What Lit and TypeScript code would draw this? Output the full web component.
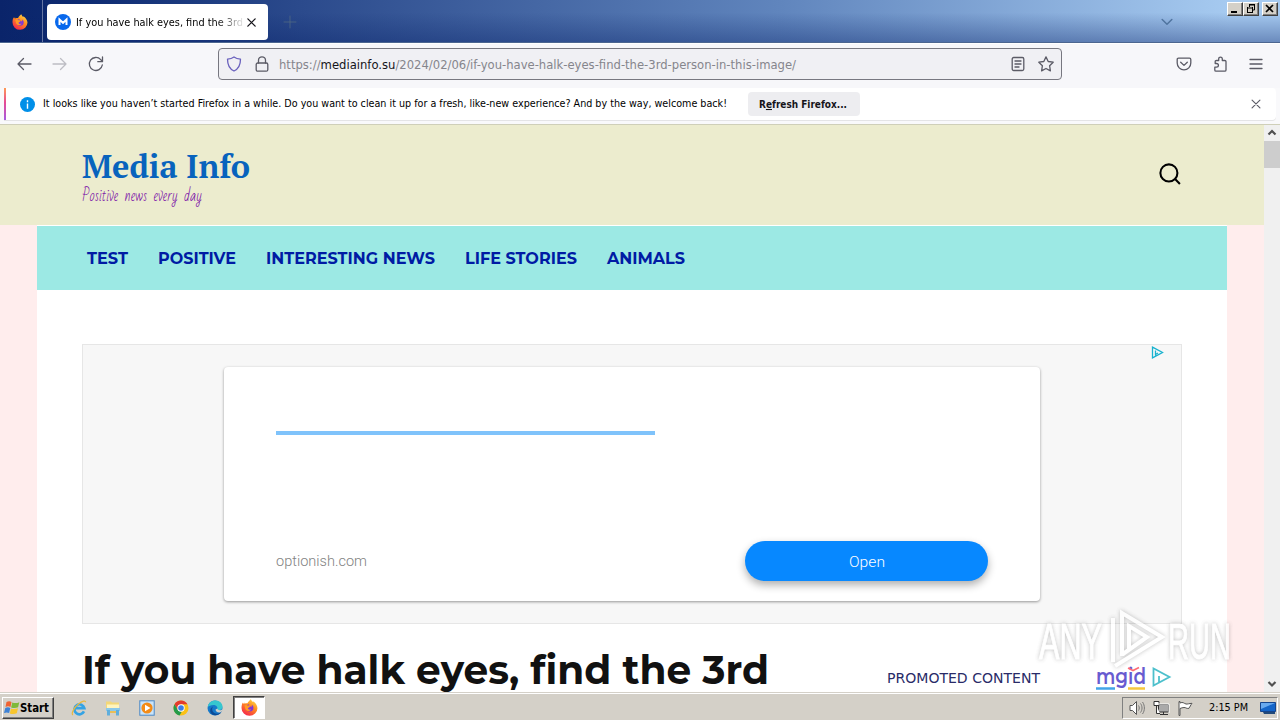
/**
 * Desktop with a maximised browser window: tab strip, toolbar, notification,
 * the news page and the taskbar.
 */

import { LitElement, css, html, svg, type TemplateResult } from 'lit';
import { customElement } from 'lit/decorators.js';

const NAV = [
  { label: 'TEST', width: 41 },
  { label: 'POSITIVE', width: 78 },
  { label: 'INTERESTING NEWS', width: 169 },
  { label: 'LIFE STORIES', width: 112 },
  { label: 'ANIMALS', width: 78 },
];

// Single line of text set to a known width.
const line = (
  text: unknown,
  width: number,
  height: number,
  baseline: number,
  cls = '',
): TemplateResult => html`
  <svg class="line ${cls}" width=${width} height=${height}>
    <text x="0" y=${baseline} textLength=${width} lengthAdjust="spacingAndGlyphs">${text}</text>
  </svg>`;

const icon = (size: number, body: unknown, cls = ''): TemplateResult => html`
  <svg class="icon ${cls}" width=${size} height=${size} viewBox="0 0 16 16">${body}</svg>`;

const firefox = svg`
  <defs>
    <linearGradient id="fx" x1="0.85" y1="0" x2="0.25" y2="1">
      <stop offset="0" stop-color="#ffe14a" />
      <stop offset="0.45" stop-color="#ff8a1e" />
      <stop offset="1" stop-color="#f5224e" />
    </linearGradient>
  </defs>
  <path fill="url(#fx)" d="M1.6 3.2 2 4.6l1-1.3.4 1.2c.9-.4 1.8-.5 2.7-.4.5-1.7 1.9-2.5 3-3.9.7.7.9 1.8 1.9 2.5l.7-.3c1.7 1.2 3.7 3.2 3.8 6.2A7.4 7.4 0 0 1 8 15.8 7.4 7.4 0 0 1 .5 8.3c0-2 .4-3.6 1.1-5.1z" />
  <path fill="#8239d4" d="M7.9 4.900c-1.900.1-3.200 1.500-3.200 3.400a3.500 3.500 0 0 0 7 0c0-1.200-.6-2.200-1.500-2.800.2.9 0 1.700-.7 2-.8-1.100-2-.7-2.600-1.200.2-.5.5-.9 1-1.400z" />
  <path fill="#ff9a26" d="M3.2 6.1c1.2-.9 2.6-.6 3.5.2 1 .1 1.7.2 1.8.7-.3.8-1.5 1-2 1.7.2 1.3 1.7 1.8 3 .9-1 2.200-4.100 2.200-5.300 0z" />`;

const back = svg`<path d="M7.5 2.5 2 8l5.500 5.500M2 8h13" />`;
const forward = svg`<path d="M8.5 2.5 14 8l-5.500 5.500M14 8H1" />`;
const reload = svg`<path d="M14.300 9A6.500 6.500 0 1 1 12.700 3.600L14 5M14.500 1v4.700H9.800" />`;
const shield = svg`<path d="M8 1c2 1.500 4.300 2 6.500 2.100C14.500 8.500 12.800 13 8 15 3.200 13 1.500 8.500 1.500 3.100 3.700 3 6 2.500 8 1z" />`;
const lock = svg`<rect x="2.2" y="7" width="11.6" height="8.2" rx="1.5" /><path d="M4.5 7V4.300a3.500 3.500 0 0 1 7 0V7" />`;
const reader = svg`<rect x="2.2" y="1.5" width="11.6" height="13" rx="1.5" /><path d="M5 5h6M5 8h6M5 11h4" />`;
const star = svg`<path d="m8 .9 2.200 4.600 5 .7-3.600 3.500.8 5.200L8 12.500 3.600 14.900l.8-5.200L.8 6.200l5-.7z" />`;
const pocket = svg`<path d="M2.5 2.200h11c.8 0 1.300.5 1.300 1.300v3.600a6.800 6.800 0 0 1-13.600 0V3.500c0-.8.5-1.300 1.300-1.300zM4.700 6.200 8 9.400l3.300-3.200" />`;
const puzzle = svg`<path d="M4 15.200h8.700c.8 0 1.300-.5 1.300-1.300V5.500c0-.7-.5-1-1.200-1H10.300V3c0-2.600-3.600-2.600-3.600 0v1.500H4.500c-.8 0-1.300.4-1.300 1.200v1.800h1.200c2.700 0 2.700 3.700 0 3.700H2.800V14c0 .8.500 1.200 1.200 1.200z" />`;
const menu = svg`<path d="M2 3.500h12M2 8h12M2 12.500h12" />`;
const cross = svg`<path d="m3.500 3.500 9 9m0-9-9 9" />`;
const chevron = svg`<path d="m2.500 5.200 5.500 5.300 5.500-5.300" />`;

const ie = svg`
  <path fill="none" stroke="#35a3e4" stroke-width="2.600" d="M13 10.800a5 5 0 1 1 .3-3.300H4.300" transform="translate(0 .6)" />
  <path fill="none" stroke="#e9b83c" stroke-width="1.200" d="M2 15C-.3 14 2.800 7.700 7.500 4c3.700-3 7.200-4 7.200-1.700" />`;
const explorer = svg`
  <path fill="#f3d778" d="M1 1.500h5l1 1h7v8H1z" /><path fill="#fff4bd" d="M2 4.500h12v5H2z" />
  <path fill="#8bc8e9" d="M1 8h14v3H1z" /><path fill="#60aedc" d="M2 10h3v5.500H2zM11 10h3v5.500h-3z" />
  <path fill="#e9be56" d="M5 11h6v2H5z" />`;
const player = svg`
  <rect x=".8" y=".8" width="14.4" height="14.4" fill="#c9e4fa" stroke="#4a88c5" />
  <circle cx="8" cy="8" r="5.6" fill="#f38b16" /><path fill="#fff" d="m6 4.700 5.500 3.300L6 11.300z" />`;
const chrome = svg`
  <circle cx="8" cy="8" r="7.5" fill="#fbc116" />
  <path fill="#e33b2e" d="M1.500 4.200A7.500 7.500 0 0 1 14.500 4.300H8L4.800 10z" />
  <path fill="#249b4a" d="M1.500 4.200 4.800 9.900 8 11.600l.7.100-2.100 3.700A7.500 7.500 0 0 1 1.500 4.200z" />
  <circle cx="8" cy="8" r="3.7" fill="#fff" /><circle cx="8" cy="8" r="2.8" fill="#3c7de5" />`;
const edge = svg`
  <circle cx="8" cy="8" r="7.5" fill="#1679ca" />
  <path fill="#36c7cf" d="M.7 7C1.500 2.500 5 .4 8.400.5c4.500.1 7.300 3.300 7.100 6.500-.1 2-1.700 3.200-3.800 3.200-1.300 0-2-.4-1.400-1.300C11 7.500 9.500 5 6.500 5 3.800 5 1.800 6 .7 7z" />
  <path fill="#0c4b96" d="M6 6.500c-2.300 3 .2 7.300 4.200 7.200 2-.1 3.500-.9 4.300-1.700-3.200 4.500-10.300 4.300-11.300-.5C2.900 9.200 4 7.500 6 6.500z" />
  <path fill="#d4d0c8" d="M10.500 8.500c0 1 1 1.700 2.500 1.700 1.300 0 2.300-.6 2.600-1.500 0 2-1.100 3.500-3 3.800-2.600.2-4.200-1.500-4-3z" />`;
const windowsFlag = svg`
  <path fill="#ef6332" d="M2.500 2C4.500.8 6 1 7.500 2l-1 5C5 6 3.300 6 1.500 7z" />
  <path fill="#7fb93b" d="M8.300 2.400c2 1 4.700.9 7-.2l-1.200 5c-2 1-4.700 1.100-7 .2z" />
  <path fill="#3d82d6" d="M1.300 8C3 7.100 4.800 7.200 6.300 8l-1.200 5C3.600 12.200 2 12.200 0 13.100z" />
  <path fill="#f8c62e" d="M7 8.500c2 .9 4.700.7 7-.2l-1.200 5c-2 1-4.700 1.100-7 .2z" />`;
const speaker = svg`
  <path fill="#fff" stroke="#555" d="M1 5.500h2.500l4-4v13l-4-4H1z" />
  <path fill="none" stroke="#777" d="M9.500 5.500c1 1.500 1 3.500 0 5M11.500 3.500c2 2.500 2 6.500 0 9M13.500 2c2.500 3.500 2.500 8.500 0 12" />`;
const network = svg`
  <rect x="5.5" y="4.5" width="10" height="7.5" fill="#aaa" stroke="#333" />
  <path stroke="#333" fill="#fff" d="M7 14.500h8M10.500 12v2.500M1 1.500h5v4H1zM3.500 5.500v8H7" />
  <path stroke="#fff" d="M5 4h11M16 4v9" />`;
const flag = svg`<path fill="#fff" stroke="#555" d="M2 15.500v-14h1v1.500c3-1.500 4 .5 6 1 1.500.3 3-.5 6-.7-1.500 2-2 3.500-3 5-3 .6-3-1-5-.8-1.500 0-2.500.5-4 1v7z" />`;
const monitor = svg`<path fill="#1565c8" stroke="#16458d" d="M.5 2.500h15v9H.5z" /><path fill="#68a9ee" d="M1 3h14L1 9z" /><path fill="#234a7a" d="M3 12h12v2H4z" />`;

@customElement('app-root')
export class AppRoot extends LitElement {
  static override styles = css`
    :host {
      display: flex;
      flex-direction: column;
      width: 1280px;
      height: 720px;
      overflow: hidden;
      position: relative;
      background: #f9f9fb;
      font-family: 'DejaVu Sans Condensed', 'DejaVu Sans', sans-serif;
      font-size: 10.5px;
      color: #000;
    }
    * { box-sizing: border-box; }
    svg { display: block; flex: none; }
    .line { overflow: visible; }
    .line text { fill: currentColor; }
    .icon { overflow: visible; }
    .stroke {
      fill: none;
      stroke: #5b5b66;
      stroke-width: 1.3;
      stroke-linecap: round;
      stroke-linejoin: round;
    }
    .grow { flex: 1; }

    .tabs {
      display: flex;
      flex: none;
      height: 43px;
      background:
        linear-gradient(180deg, rgba(10, 36, 106, 0) 30%, rgba(10, 36, 106, 0.38)),
        linear-gradient(90deg, #0a246a 0, #0e2b72 80px, #2b4a8c 300px, #6085bd 780px, #a6caf0 1230px);
      border-bottom: 1px solid #4c6690;
    }
    .home {
      width: 43px;
      padding: 14px 0 0 12px;
      border-right: 1px solid #6576a3;
    }
    .tab {
      display: flex;
      align-items: center;
      width: 221px;
      height: 36px;
      margin: 4px 0 0 4px;
      padding-left: 8px;
      border-radius: 4px;
      background: #fff;
    }
    .title {
      margin-left: 5px;
      width: 168px;
      overflow: hidden;
      -webkit-mask-image: linear-gradient(90deg, #000 140px, transparent 170px);
      mask-image: linear-gradient(90deg, #000 140px, transparent 170px);
    }
    .close-tab { stroke: #15141a; stroke-width: 1.6; margin-left: 1px; }
    .plus { margin: 16px 0 0 16px; stroke: #536b84; stroke-width: 1; }
    .all-tabs { margin: 15px 53px 0 0; stroke: #50749f; stroke-width: 1.7; }
    .buttons { display: flex; padding: 2px 2px 0 0; }
    .win {
      width: 16px;
      height: 14px;
      background: #d4d0c8;
      border: 1px solid;
      border-color: #fff #404040 #404040 #fff;
      box-shadow: inset -1px -1px #808080;
    }
    .win.last { margin-left: 3px; }
    .win svg { margin: 0 0 0 1px; }

    .toolbar {
      display: flex;
      flex: none;
      align-items: center;
      height: 45px;
      padding: 0 16px 5px;
      border-top: 1px solid #fff;
      background: #f7f7fa;
    }
    .faded { stroke: #bdbdc4; }
    .gap { margin-left: 20px; }
    .url {
      display: flex;
      align-items: center;
      width: 844px;
      height: 32px;
      margin-left: 114px;
      padding: 0 7px;
      border: 1px solid #777780;
      border-radius: 4px;
      background: #f0f0f4;
      font-size: 13px;
      color: #85858c;
    }
    .url .host { fill: #15141a; }
    .url .shield { stroke: #6960bd; }

    .notice {
      display: flex;
      flex: none;
      align-items: center;
      width: 1272px;
      height: 32px;
      margin-left: 4px;
      padding: 0 13px 0 16px;
      position: relative;
      background: #fff;
      border-radius: 0 4px 4px 0;
      box-shadow: 0 1px #e4e4e6;
    }
    .notice::before {
      content: '';
      position: absolute;
      inset: 0 auto 0 0;
      width: 2px;
      background: linear-gradient(#ff9a55, #e64a94 45%, #a65be0);
    }
    .refresh {
      width: 112px;
      height: 24px;
      margin-left: 21px;
      padding: 5px 11px;
      border: 0;
      border-radius: 4px;
      background: #ededf0;
      font: bold 10.5px 'DejaVu Sans Condensed', 'DejaVu Sans', sans-serif;
      color: #15141a;
    }
    .refresh .key { text-decoration: underline; }
    .seam { flex: none; height: 5px; border-bottom: 1px solid #cfcfb9; }

    .view { display: flex; flex: none; height: 567px; }
    .page {
      width: 1264px;
      overflow: hidden;
      background: #ffeded;
    }
    .header {
      display: flex;
      justify-content: space-between;
      height: 100px;
      padding: 24px 83px 0 82px;
      background: #ececce;
    }
    .brand { font: bold 33px 'PT Serif', 'DejaVu Serif Condensed', 'DejaVu Serif', serif; color: #0863bd; }
    .tagline {
      font: 15px 'Bad Script', Caveat, 'Open Sans', cursive;
      word-spacing: 3px;
      color: #7b13a8;
    }
    .search { margin-top: 14px; fill: none; stroke: #000; stroke-width: 1.5; }
    .sheet {
      width: 1190px;
      height: 467px;
      margin-left: 37px;
      padding-top: 1px;
      background: #fff;
    }
    .menu {
      display: flex;
      align-items: center;
      gap: 30px;
      height: 64px;
      padding-left: 50px;
      background: #9ce9e4;
      font: bold 15.5px Montserrat, Inter, sans-serif;
      color: #001ba4;
    }
    .ad {
      display: flex;
      justify-content: center;
      width: 1100px;
      height: 280px;
      margin: 54px 0 0 45px;
      padding-top: 22px;
      position: relative;
      border: 1px solid #e6e6e6;
      background: #f7f7f7;
    }
    .choices { position: absolute; top: 1px; right: 17px; }
    .card {
      width: 816px;
      height: 234px;
      padding: 64px 52px 0;
      border-radius: 4px;
      background: #fff;
      box-shadow: 0 1px 3px rgba(0, 0, 0, 0.4);
    }
    .rule { width: 379px; height: 4px; background: #7fc3fb; }
    .offer {
      display: flex;
      align-items: center;
      justify-content: space-between;
      margin-top: 106px;
      font: 300 14.5px Roboto, sans-serif;
      color: #828282;
    }
    .open {
      display: flex;
      align-items: center;
      justify-content: center;
      width: 243px;
      height: 40px;
      border: 0;
      border-radius: 20px;
      background: #0788ff;
      box-shadow: 0 4px 9px rgba(0, 0, 0, 0.32);
      font: 300 15px Roboto, sans-serif;
      color: #fff;
    }
    .below { display: flex; padding: 24px 0 0 45px; }
    .headline { font: bold 39.5px Montserrat, Inter, sans-serif; color: #111; }
    .promo {
      margin: 20px 0 0 118px;
      font: 14px 'DejaVu Sans Condensed', 'DejaVu Sans', sans-serif;
      color: #292b68;
    }
    .mgid { margin: 19px 0 0 56px; overflow: visible; }
    .mgid text { font: 600 22px Montserrat, Inter, sans-serif; fill: #685bd0; }

    .scroll {
      display: flex;
      flex-direction: column;
      justify-content: space-between;
      width: 16px;
      background: #f0f0f0;
    }
    .scroll svg { margin: 2px; fill: none; stroke: #505050; stroke-width: 2.2; }
    .thumb { height: 27px; background: #cdcdcd; }

    .watermark { position: absolute; left: 1036px; top: 604px; overflow: visible; }
    .watermark text { font: 50px 'Liberation Sans Narrow', 'Liberation Sans', sans-serif; stroke: #fff; stroke-width: 1; }
    .mark { filter: drop-shadow(0 0 2px rgba(70, 70, 70, 0.45)); opacity: 0.75; }

    .taskbar {
      display: flex;
      align-items: center;
      flex: none;
      height: 28px;
      padding: 2px 2px 0 2px;
      border-top: 1px solid #d4d0c8;
      background: #d4d0c8;
      box-shadow: inset 0 1px #fff;
    }
    .start {
      display: flex;
      align-items: center;
      gap: 1px;
      width: 52px;
      height: 22px;
      padding: 0 0 0 1px;
      border: 1px solid;
      border-color: #fff #404040 #404040 #fff;
      box-shadow: inset -1px -1px #808080;
      background: #d4d0c8;
      font: bold 11.5px 'DejaVu Sans Condensed', 'DejaVu Sans', sans-serif;
      color: #000;
    }
    .start .line { margin-left: -1px; }
    .apps { display: flex; gap: 18px; margin-left: 17px; }
    .running {
      display: flex;
      justify-content: center;
      align-items: center;
      width: 32px;
      height: 23px;
      margin-left: 10px;
      border: 1px solid;
      border-color: #404040 #fff #fff #404040;
      box-shadow: inset 1px 1px #808080;
      background: #fff;
    }
    .tray {
      display: flex;
      align-items: center;
      width: 156px;
      height: 22px;
      padding-left: 6px;
      border: 1px solid;
      border-color: #808080 #fff #fff #808080;
      font-size: 11px;
    }
    .tray .icon { margin-right: 8px; }
    .clock { padding: 0 12px 0 8px; }
    .tray .icon:last-child { margin-right: 0; }
    .after-shield { margin-left: 12px; }
    .address { margin-left: 9px; }
    .message { margin-left: 8px; }
  `;

  private renderTabs(): TemplateResult {
    return html`
      <div class="tabs">
        <div class="home">${icon(16, firefox)}</div>
        <div class="tab">
          ${icon(16, svg`<circle cx="8" cy="8" r="8" fill="#0868ec" /><path d="M4.500 11V5.500L8 8.800l3.500-3.300V11" fill="none" stroke="#fff" stroke-width="2" />`)}
          <div class="title">${line('If you have halk eyes, find the 3rd', 167, 16, 12)}</div>
          ${icon(13, cross, 'stroke close-tab')}
        </div>
        ${icon(12, svg`<path d="M8 0v16M0 8h16" />`, 'stroke plus')}
        <div class="grow"></div>
        ${icon(14, chevron, 'stroke all-tabs')}
        <div class="buttons">
          <div class="win"><svg width="12" height="12"><path d="M2 8h6v2H2z" /></svg></div>
          <div class="win">
            <svg width="12" height="12" fill="none" stroke="#000">
              <path d="M4.500 1v3M4 2h6M9.500 1v6H7M2.500 4v6M2 5h6M7.500 4v6M2 9.500h6M4 1.500h6" />
            </svg>
          </div>
          <div class="win last"><svg width="12" height="12" stroke="#000" stroke-width="1.7"><path d="m2 2 7 7m0-7-7 7" /></svg></div>
        </div>
      </div>`;
  }

  private renderToolbar(): TemplateResult {
    return html`
      <div class="toolbar">
        ${icon(16, back, 'stroke')}
        <div class="gap">${icon(16, forward, 'stroke faded')}</div>
        <div class="gap">${icon(16, reload, 'stroke')}</div>
        <div class="url">
          ${icon(16, shield, 'stroke shield')}
          ${icon(16, lock, 'stroke after-shield')}
          <div class="address">
            ${line(svg`https://<tspan class="host">mediainfo.su</tspan>/2024/02/06/if-you-have-halk-eyes-find-the-3rd-person-in-this-image/`, 517, 18, 14)}
          </div>
          <div class="grow"></div>
          ${icon(16, reader, 'stroke')}
          ${icon(16, star, 'stroke after-shield')}
        </div>
        <div class="grow"></div>
        ${icon(16, pocket, 'stroke')}
        <div class="gap">${icon(16, puzzle, 'stroke')}</div>
        <div class="gap">${icon(16, menu, 'stroke')}</div>
      </div>
      <div class="notice">
        ${icon(15, svg`<circle cx="8" cy="8" r="8" fill="#008fe8" /><path stroke="#fff" stroke-width="1.5" d="M8 7v5.500M8 3.500v2" />`)}
        <div class="message">
          ${line(
            'It looks like you haven’t started Firefox in a while. Do you want to clean it up for a fresh, like-new experience? And by the way, welcome back!',
            684, 16, 11,
          )}
        </div>
        <button class="refresh">
          ${line(svg`R<tspan class="key">e</tspan>fresh Firefox...`, 88, 14, 11)}
        </button>
        <div class="grow"></div>
        ${icon(14, cross, 'stroke')}
      </div>
      <div class="seam"></div>`;
  }

  private renderPage(): TemplateResult {
    return html`
      <div class="page">
        <div class="header">
          <div>
            ${line('Media Info', 168, 38, 29, 'brand')}
            ${line('Positive news every day', 120, 20, 14, 'tagline')}
          </div>
          <svg class="search" width="22" height="22" viewBox="0 0 16 16"><circle cx="7.2" cy="7.2" r="6.2" /><path d="m11.700 11.700 3.500 3.500" /></svg>
        </div>
        <div class="sheet">
          <div class="menu">${NAV.map((item) => line(item.label, item.width, 20, 16))}</div>
          <div class="ad">
            <svg class="choices" width="13" height="13" fill="none" stroke="#19b2cf" stroke-width="1.3">
              <path d="M1.500 1.200v10.600L11.500 6.500zM4.500 4.500v5M4.500 8.500 7 7" />
            </svg>
            <div class="card">
              <div class="rule"></div>
              <div class="offer">
                ${line('optionish.com', 91, 18, 14)}
                <button class="open">${line('Open', 36, 18, 15)}</button>
              </div>
            </div>
          </div>
          <div class="below">
            ${line('If you have halk eyes, find the 3rd', 687, 44, 36, 'headline')}
            <div class="promo">${line('PROMOTED CONTENT', 153, 18, 15)}</div>
            <svg class="mgid" width="76" height="24">
              <text x="0" y="17" textLength="50" lengthAdjust="spacingAndGlyphs">mgid</text>
              <path d="m32 1 5 2.500 6-3" fill="none" stroke="#ff6b74" stroke-width="1.6" />
              <path d="M0 21.500h19" stroke="#43a5e8" stroke-width="2.5" /><path d="M32 21.500h17" stroke="#f6c83e" stroke-width="2.5" />
              <path d="M57.500 1.500v17l16-8.500zM63 16V9" fill="none" stroke="#4dc0cc" stroke-width="1.8" />
            </svg>
          </div>
        </div>
      </div>
      <div class="scroll">
        <div>
          <svg width="12" height="12"><path d="m2.500 7.500 3.500-3.500 3.500 3.500" /></svg>
          <div class="thumb"></div>
        </div>
        <svg width="12" height="12"><path d="m2.500 4 3.500 3.500 3.500-3.500" /></svg>
      </div>`;
  }

  private renderTaskbar(): TemplateResult {
    return html`
      <div class="taskbar">
        <button class="start">${icon(16, windowsFlag)}${line('Start', 29, 16, 12)}</button>
        <div class="apps">${[ie, explorer, player, chrome, edge].map((app) => icon(16, app))}</div>
        <div class="running">${icon(17, firefox)}</div>
        <div class="grow"></div>
        <div class="tray">
          ${icon(16, speaker)}${icon(16, network)}${icon(16, flag)}
          <div class="clock">${line('2:15 PM', 39, 14, 10)}</div>
          ${icon(16, monitor)}
        </div>
      </div>`;
  }

  override render(): TemplateResult {
    return html`
      ${this.renderTabs()}
      ${this.renderToolbar()}
      <div class="view">${this.renderPage()}</div>
      ${this.renderTaskbar()}
      <svg class="watermark" width="200" height="72">
        <g class="mark" fill="#fff">
          <text x="3" y="55" textLength="63" lengthAdjust="spacingAndGlyphs">ANY</text>
          <text x="132" y="55" textLength="63" lengthAdjust="spacingAndGlyphs">RUN</text>
          <path fill="none" stroke="#fff" stroke-width="4" d="M77 58V14M86 52V9L126 33 79 62M93 46V22l18 11-24 17" />
        </g>
      </svg>`;
  }
}

declare global {
  interface HTMLElementTagNameMap {
    'app-root': AppRoot;
  }
}
